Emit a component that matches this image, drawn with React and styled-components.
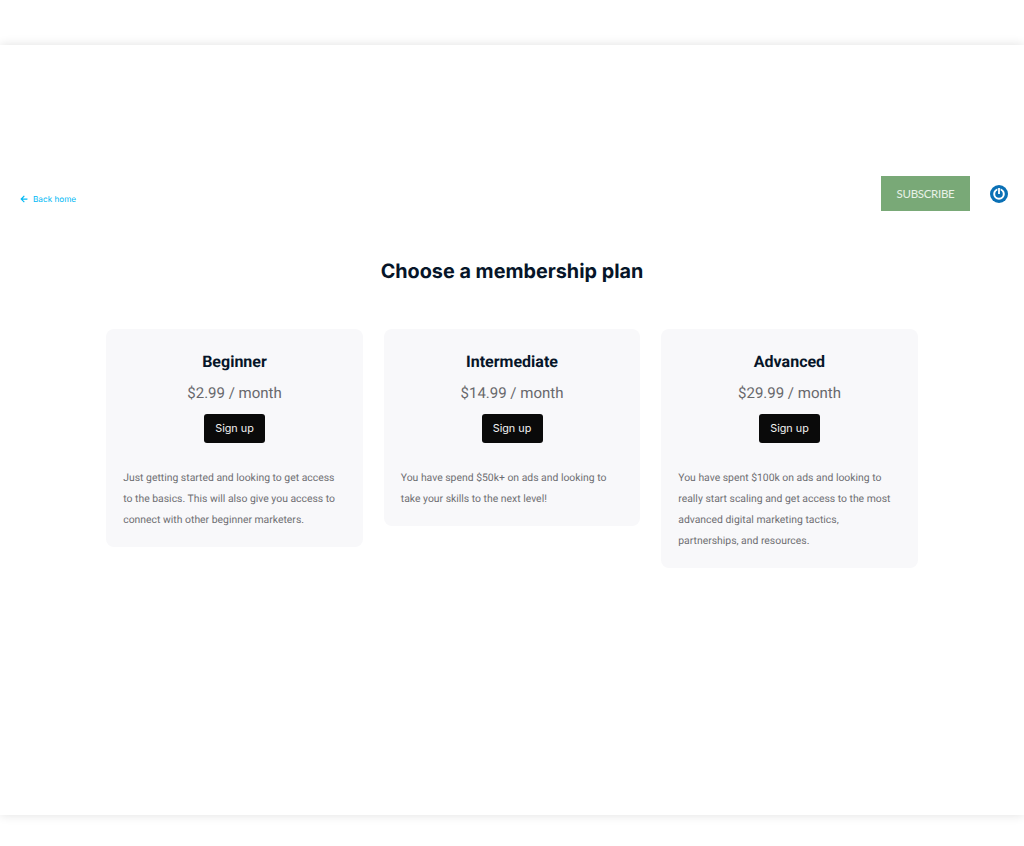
import React from 'react'
import styled, { createGlobalStyle } from 'styled-components'
import { FaArrowLeft } from 'react-icons/fa'

const GlobalStyle = createGlobalStyle`
    html, body {
        margin: 0;
        padding: 0;
        background: #fff;
        font-family: "Roboto", sans-serif;
        text-rendering: geometricPrecision;
    }
`

const Page = styled.div`
    padding-top: 45px;
    height: 846px;
    box-sizing: border-box;
    overflow: hidden;
`

const Main = styled.main`
    height: 770px;
    background: #fff;
    box-shadow: 0 0 10px rgba(0,0,0,.12);
    padding-top: 131px;
    box-sizing: border-box;
`

const TopRow = styled.div`
    display: flex;
    align-items: center;
    height: 35px;
    padding: 0 16px 0 20px;
`

const BackLink = styled.a`
    display: flex;
    align-items: center;
    gap: 5px;
    margin-top: 10px;
    margin-right: auto;
    color: #00b9f5;
    font-family: "Inter", sans-serif;
    font-size: 8.2px;
    text-decoration: none;
`

const SubscribeButton = styled.button`
    width: 89px;
    height: 35px;
    border: 0;
    padding: 0 0 1px;
    background: #79a977;
    color: #e8f1e7;
    font-family: "Lato", sans-serif;
    font-size: 11.5px;
    letter-spacing: -.3px;
    margin-right: 20px;
`

const Title = styled.h1`
    margin: 48px 0 0;
    text-align: center;
    color: #061528;
    font-family: "Inter", sans-serif;
    font-size: 19.8px;
    line-height: 24px;
    font-weight: 700;
`

const Plans = styled.div`
    display: grid;
    grid-template-columns: repeat(3, 256.5px);
    justify-content: center;
    column-gap: 21px;
    align-items: start;
    margin-top: 46px;
`

const Card = styled.section`
    background: #f8f8fa;
    border-radius: 8px;
    padding: 23px 17px 16px;
    box-sizing: border-box;
    text-align: center;
`

const PlanName = styled.h2`
    margin: 0;
    color: #061528;
    font-family: "Roboto", sans-serif;
    font-size: 16px;
    line-height: 20px;
    font-weight: 700;
`

const Price = styled.p`
    margin: 11px 0 0;
    color: #68686c;
    font-size: 15px;
    line-height: 20px;
`

const SignUp = styled.button`
    width: 61px;
    height: 29px;
    padding: 0;
    margin-top: 11px;
    border: 0;
    border-radius: 3px;
    background: #0a0a0a;
    color: #f2f2f2;
    font-family: "Inter", sans-serif;
    font-size: 10.8px;
`

const Description = styled.p`
    margin: 25px 0 0;
    text-align: left;
    color: #6e6e72;
    font-size: 10.4px;
    line-height: 20.9px;
`

const plans = [
    { name: 'Beginner', price: '$2.99 / month', text: 'Just getting started and looking to get access to the basics. This will also give you access to connect with other beginner marketers.' },
    { name: 'Intermediate', price: '$14.99 / month', text: 'You have spend $50k+ on ads and looking to take your skills to the next level!' },
    { name: 'Advanced', price: '$29.99 / month', text: 'You have spent $100k on ads and looking to really start scaling and get access to the most advanced digital marketing tactics, partnerships, and resources.' },
]

const PowerIcon = () => (
    <svg width="18" height="18" viewBox="0 0 18 18">
        <circle cx="9" cy="9" r="9" fill="#0a70b5" />
        <circle cx="9" cy="9" r="4.8" fill="none" stroke="#fff" strokeWidth="2" />
        <rect x="7.4" y="2.5" width="3.2" height="7" fill="#0a70b5" />
        <rect x="8.1" y="3" width="1.8" height="6" fill="#fff" />
    </svg>
)

const App = () => {
    return (
        <Page>
            <GlobalStyle />
            <Main>
                <TopRow>
                    <BackLink href="#"><FaArrowLeft size={8} /> Back home</BackLink>
                    <SubscribeButton>SUBSCRIBE</SubscribeButton>
                    <PowerIcon />
                </TopRow>
                <Title>Choose a membership plan</Title>
                <Plans>
                    {plans.map(plan => (
                        <Card key={plan.name}>
                            <PlanName>{plan.name}</PlanName>
                            <Price>{plan.price}</Price>
                            <SignUp>Sign up</SignUp>
                            <Description>{plan.text}</Description>
                        </Card>
                    ))}
                </Plans>
            </Main>
        </Page>
    )
}

export default App
